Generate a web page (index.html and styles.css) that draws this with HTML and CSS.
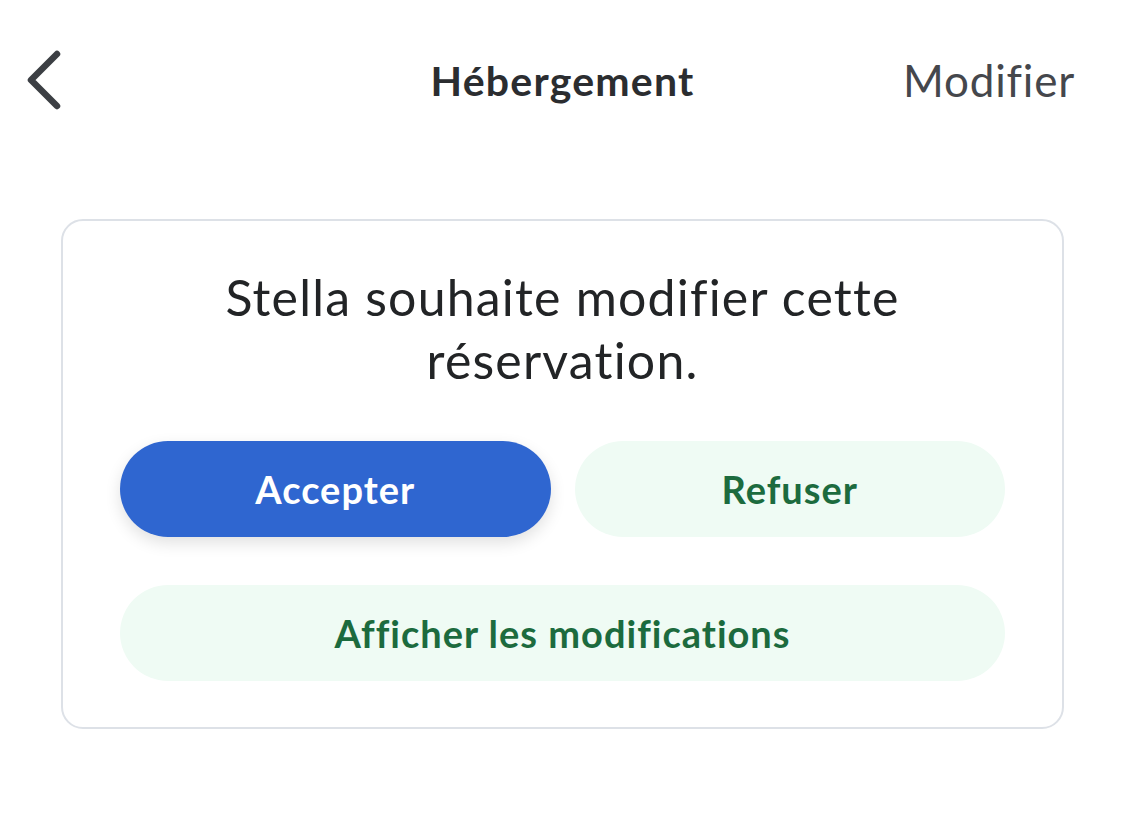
FILE: index.html
```html
<!DOCTYPE html>
<html lang="fr">
<head>
    <meta charset="UTF-8">
    <meta name="viewport" content="width=device-width, initial-scale=1.0">
    <title>Hébergement</title>
    <link rel="stylesheet" href="styles.css">
</head>
<body>
    <div class="top-bar">
        <button class="back-btn" aria-label="Retour">
            <svg width="36" height="60" viewBox="0 0 36 60">
                <path d="M31 4 L5 30 L31 56" fill="none" stroke="#3c3f44" stroke-width="6.5" stroke-linecap="round" stroke-linejoin="round"/>
            </svg>
        </button>
        <div class="title">Hébergement</div>
        <button class="edit-btn">Modifier</button>
    </div>

    <div class="card">
        <p class="card-text">Stella souhaite modifier cette réservation.</p>
        <div class="actions">
            <button class="btn btn-primary">Accepter</button>
            <button class="btn btn-soft">Refuser</button>
            <button class="btn btn-soft btn-wide">Afficher les modifications</button>
        </div>
    </div>
</body>
</html>
```

FILE: styles.css
```css
body {
    margin: 0;
    font-family: Lato, "Open Sans", sans-serif;
    font-variant-ligatures: none;
    background-color: #fff;
    color: #222426;
}
button {
    font-family: inherit;
    font-variant-ligatures: none;
    border: none;
    background: none;
    cursor: pointer;
}
.top-bar {
    display: grid;
    grid-template-columns: 1fr auto 1fr;
    align-items: center;
    height: 100px;
    padding: 30px 50px 0 50px;
}
.back-btn {
    justify-self: start;
    margin-left: -24px;
    padding: 0;
    display: flex;
}
.title {
    font-size: 41px;
    font-weight: 700;
    letter-spacing: 1.2px;
    color: #2b2d30;
}
.edit-btn {
    justify-self: end;
    padding: 0;
    font-size: 44px;
    letter-spacing: 0.8px;
    color: #45474c;
}
.card {
    margin: 89px 61px 0 61px;
    border: 2px solid #dde1e7;
    border-radius: 22px;
    padding: 45px 57px 46px;
}
.card-text {
    margin: 0 0 49px;
    text-align: center;
    font-size: 50px;
    line-height: 63px;
    letter-spacing: 1.2px;
    padding: 0 60px;
    color: #222426;
}
.actions {
    display: grid;
    grid-template-columns: 1fr 1fr;
    column-gap: 24px;
    row-gap: 48px;
}
.btn {
    height: 96px;
    border-radius: 48px;
    font-size: 38px;
    font-weight: 700;
    letter-spacing: 1px;
}
.btn-primary {
    background-color: #2f66d0;
    color: #fff;
    box-shadow: 0 6px 16px rgba(0, 0, 0, 0.12);
}
.btn-soft {
    background-color: #effbf4;
    color: #1c6b3e;
}
.btn-wide {
    grid-column: 1 / 3;
}
```
